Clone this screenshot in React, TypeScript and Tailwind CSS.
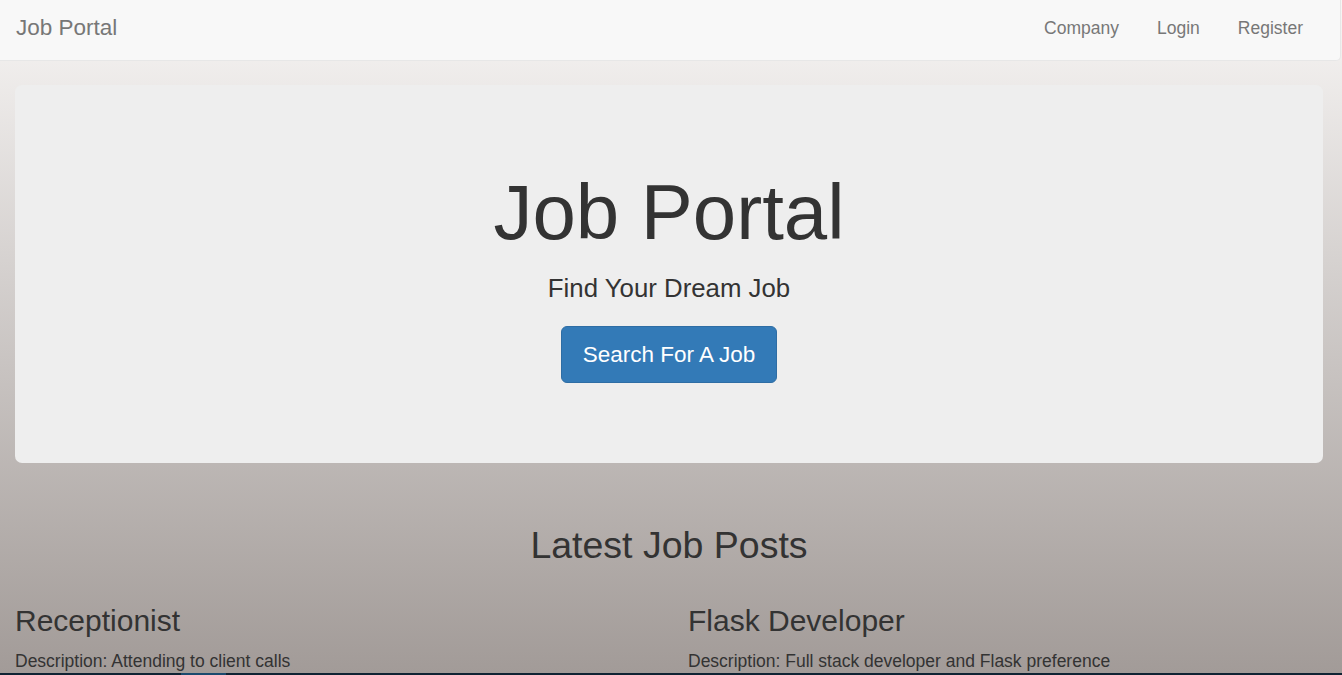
import React from "react";

export default function App() {
  const font = { fontFamily: '"Liberation Sans", Arial, sans-serif' };
  return (
    <div className="w-[1342px] h-[675px] overflow-hidden flex flex-col" style={font}>
      <div className="h-[673px] overflow-hidden bg-gradient-to-b from-[#f8f6f5] to-[#a29b98] text-[#333]">
        <nav className="w-[1341px] h-[61px] bg-[#f8f8f8] border-b border-r border-[#e7e7e7] rounded-br-[5px] flex items-center justify-between">
          <div className="pl-[16px] text-[22.5px] text-[#777] leading-none -mt-[3px]">Job Portal</div>
          <div className="flex items-center pr-[37px] text-[17.5px] text-[#777] -mt-[4px]">
            <span className="px-[19px]">Company</span>
            <span className="px-[19px]">Login</span>
            <span className="pl-[19px]">Register</span>
          </div>
        </nav>
        <div className="px-[15px] w-[1338px]">
          <div className="mt-[24px] h-[378px] bg-[#eeeeee] rounded-[7px] flex flex-col items-center pt-[84px]">
            <h1 className="text-[78px] leading-[86px]">Job Portal</h1>
            <p className="mt-[15px] text-[25.8px] leading-[36px]">Find Your Dream Job</p>
            <div className="mt-[20px] h-[57px] px-[21px] flex items-center bg-[#337ab7] border border-[#2e6da4] rounded-[6px] text-white text-[22.5px]">
              Search For A Job
            </div>
          </div>
          <h2 className="mt-[62px] text-center text-[37.5px] leading-[41px]">Latest Job Posts</h2>
          <div className="grid grid-cols-[673px_1fr] mt-[38px]">
            <div>
              <h3 className="text-[30px] leading-[33px]">Receptionist</h3>
              <p className="mt-[12px] text-[17.5px] leading-[25px]">Description: Attending to client calls</p>
            </div>
            <div>
              <h3 className="text-[30px] leading-[33px]">Flask Developer</h3>
              <p className="mt-[12px] text-[17.5px] leading-[25px]">Description: Full stack developer and Flask preference</p>
            </div>
          </div>
        </div>
      </div>
      <div className="h-[2px] bg-[#0f2333] flex">
        <div className="ml-[181px] w-[45px] bg-[#1b4a6e]" />
      </div>
    </div>
  );
}
